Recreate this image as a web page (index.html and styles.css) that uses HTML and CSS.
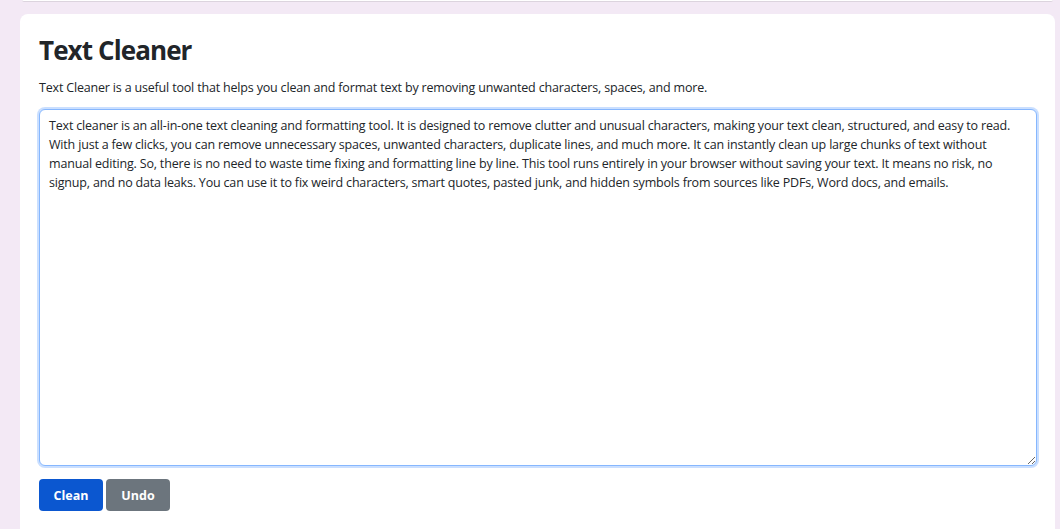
FILE: index.html
```html
<!DOCTYPE html>
<html lang="en">
<head>
    <meta charset="UTF-8">
    <meta name="viewport" content="width=device-width, initial-scale=1.0">
    <title>Text Cleaner</title>
    <link rel="stylesheet" href="styles.css">
</head>
<body>
    <div class="prev-card"></div>

    <div class="card">
        <h1>Text Cleaner</h1>
        <p class="intro">Text Cleaner is a useful tool that helps you clean and format text by removing unwanted characters, spaces, and more.</p>
        <textarea id="textInput" class="text-box">Text cleaner is an all-in-one text cleaning and formatting tool. It is designed to remove clutter and unusual characters, making your text clean, structured, and easy to read.
With just a few clicks, you can remove unnecessary spaces, unwanted characters, duplicate lines, and much more. It can instantly clean up large chunks of text without
manual editing. So, there is no need to waste time fixing and formatting line by line. This tool runs entirely in your browser without saving your text. It means no risk, no
signup, and no data leaks. You can use it to fix weird characters, smart quotes, pasted junk, and hidden symbols from sources like PDFs, Word docs, and emails.</textarea>
        <div class="actions">
            <button class="btn btn-primary">Clean</button>
            <button class="btn btn-secondary">Undo</button>
        </div>
    </div>
</body>
</html>
```

FILE: styles.css
```css
* {
    box-sizing: border-box;
    margin: 0;
    padding: 0;
}
body {
    font-family: "Open Sans", "Noto Sans", sans-serif;
    background: #f3e9f5;
    color: #212529;
    padding: 0 5px 0 20px;
    height: 100vh;
    overflow: hidden;
}
.prev-card {
    height: 2px;
    margin: 0 2px;
    background: #fff;
    border-bottom: 1px solid #dcd4de;
    border-radius: 0 0 6px 6px;
}
.card {
    background: #fff;
    margin-top: 12px;
    padding: 19px 18px 20px 19px;
    border-radius: 8px;
    height: 600px;
}
h1 {
    font-size: 26px;
    font-weight: 700;
    letter-spacing: -0.9px;
    line-height: 34px;
    margin-bottom: 11px;
    color: #212529;
}
.intro {
    font-size: 12.5px;
    letter-spacing: -0.18px;
    line-height: 19px;
    margin-bottom: 12px;
}
.text-box {
    display: block;
    width: 100%;
    height: 357px;
    padding: 6px 9px;
    font-family: inherit;
    font-size: 12.5px;
    letter-spacing: -0.18px;
    line-height: 19px;
    color: #212529;
    white-space: pre-wrap;
    border: 1px solid #86b7fe;
    border-radius: 6px;
    box-shadow: 0 0 0 2px rgba(13, 110, 253, 0.22);
    outline: none;
}
.actions {
    display: flex;
    gap: 3px;
    margin-top: 13px;
}
.btn {
    font-family: inherit;
    font-size: 12.5px;
    font-weight: 700;
    color: #fff;
    border: none;
    border-radius: 4px;
    height: 32px;
    width: 64px;
    cursor: pointer;
}
.btn-primary {
    background: #0b57d0;
}
.btn-secondary {
    background: #6c757d;
}
```
